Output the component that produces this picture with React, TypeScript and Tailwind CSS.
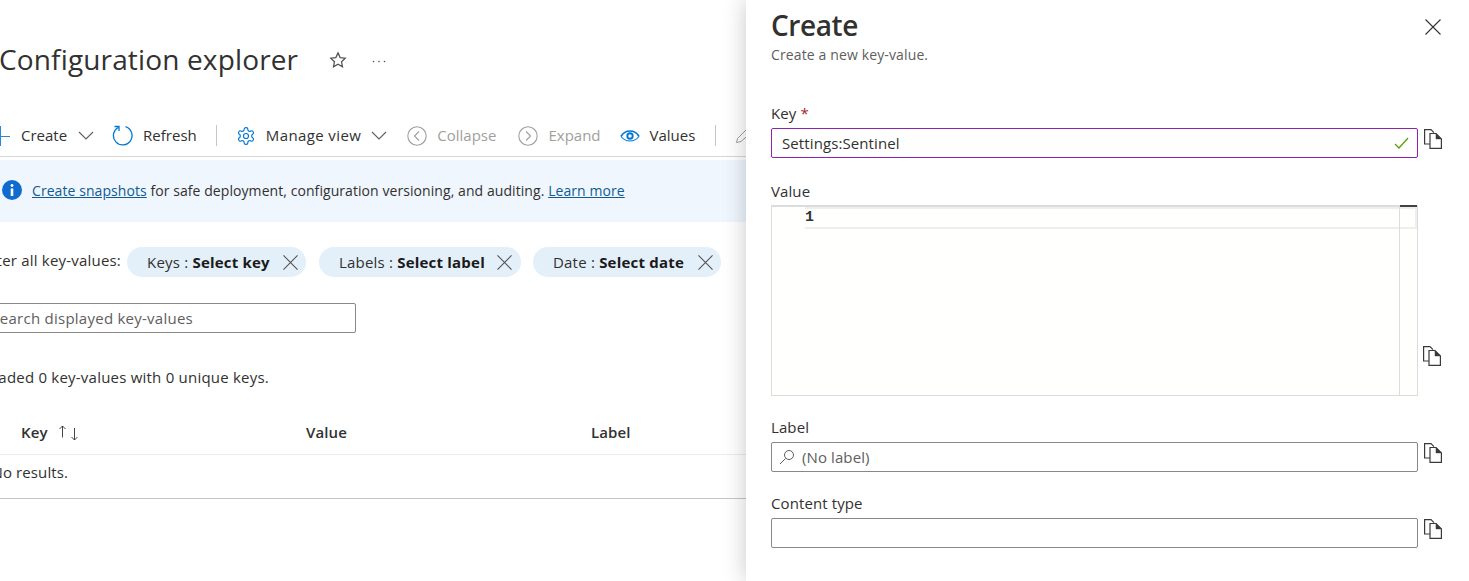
function CloseIcon({ size = 15, color = '#505050' }: { size?: number; color?: string }) {
  return (
    <svg width={size} height={size} viewBox="0 0 16 16" fill="none" stroke={color} strokeWidth="1.1">
      <path d="M0.5 0.5 15.5 15.5M15.5 0.5 0.5 15.5" />
    </svg>
  )
}

function Chevron() {
  return (
    <svg width="16" height="9" viewBox="0 0 16 9" fill="none" stroke="#605e5c" strokeWidth="1.1">
      <path d="M1 1l7 7 7-7" />
    </svg>
  )
}

function CopyIcon() {
  return (
    <svg width="18" height="20" viewBox="0 0 18 20" fill="none" stroke="#3b3a39" strokeWidth="1.2">
      <path d="M6 15H.6V.6H7l3 3" />
      <path d="M6 4.500h6l5.400 5.400v9.500H6z" fill="white" />
      <path d="M12 4.500v5.400h5.400z" fill="#3b3a39" strokeWidth="0.5" />
    </svg>
  )
}

function RoundArrow({ right }: { right?: boolean }) {
  return (
    <svg width="20" height="20" viewBox="0 0 20 20" fill="none" stroke="#a19f9d" strokeWidth="1.1">
      <circle cx="10" cy="10" r="9.200" />
      <path d={right ? 'M8 5.500l4.500 4.500L8 14.500' : 'M12 5.500 7.500 10l4.500 4.500'} />
    </svg>
  )
}

function ToolItem({ label, icon, chevron, muted, className }: { label: string; icon: React.ReactNode; chevron?: boolean; muted?: boolean; className?: string }) {
  return (
    <div className={`flex items-center ${muted ? 'text-[#a19f9d]' : 'text-[#323130]'} ${className ?? ''}`}>
      {icon}
      <span className="ml-[10px] whitespace-nowrap">{label}</span>
      {chevron && (
        <span className="ml-[10px]">
          <Chevron />
        </span>
      )}
    </div>
  )
}

function Chip({ name, value, className }: { name: string; value: string; className: string }) {
  return (
    <div className={`flex h-[30px] items-center justify-between rounded-full bg-[#e3eff9] pl-[20px] text-[15px] tracking-[0.2px] ${className}`}>
      <span className="whitespace-nowrap text-[#323130]">
        {name} : <b className="font-bold text-[#1b1a19]">{value}</b>
      </span>
      <CloseIcon />
    </div>
  )
}

function FieldLabel({ children }: { children: React.ReactNode }) {
  return <div className="h-[20px] leading-[18px] text-[#323130]">{children}</div>
}

export default function App() {
  return (
    <div className="flex h-[581px] w-[1469px] overflow-hidden bg-white font-['Open_Sans',sans-serif] text-[15px] tracking-[0.1px]">
      {/* Blade behind the panel */}
      <div className="w-[746px] shrink-0 overflow-hidden">
        <div className="flex h-[115px] items-start pt-[38px]">
          <h1 className="-ml-[1px] text-[28px] leading-[42px] tracking-[0.15px] text-[#323130]">Configuration explorer</h1>
          <svg className="ml-[31px] mt-[13px]" width="18" height="18" viewBox="0 0 24 24" fill="none" stroke="#505050" strokeWidth="1.600">
            <path d="M12 2.500l2.900 6.300 6.800.8-5 4.700 1.300 6.800-6-3.400-6 3.400 1.300-6.800-5-4.700 6.800-.8z" />
          </svg>
          <svg className="ml-[25px] mt-[22px]" width="14" height="3" viewBox="0 0 14 3" fill="#505050">
            <circle cx="1.500" cy="1.500" r="0.800" />
            <circle cx="7" cy="1.500" r="0.800" />
            <circle cx="12.500" cy="1.500" r="0.800" />
          </svg>
        </div>

        <div className="flex h-[42px] w-[760px] items-center border-b border-[#d6d6d6] tracking-normal">
          <svg className="ml-[-10px]" width="20" height="20" viewBox="0 0 20 20" stroke="#2b88d8" strokeWidth="1">
            <path d="M0 10.500h20M10.500 0v20" />
          </svg>
          <span className="ml-[11px] text-[#323130]">Create</span>
          <span className="ml-[11px]">
            <Chevron />
          </span>
          <div className="ml-[18px]">
            <ToolItem
              label="Refresh"
              icon={
                <svg width="21" height="21" viewBox="0 0 21 21" fill="none" stroke="#0078d4" strokeWidth="1.300">
                  <path d="M6.500 2.300A9.300 9.300 0 1 0 13.500 1.700" />
                  <path d="M2.500 1.500h4.500V6" strokeLinejoin="miter" />
                </svg>
              }
            />
          </div>
          <div className="ml-[19px] h-[21px] w-px bg-[#c8c6c4]" />
          <div className="ml-[19px]">
            <ToolItem
              label="Manage view"
              chevron
              className="tracking-[0.4px]"
              icon={
                <svg width="20" height="20" viewBox="0 0 24 24" fill="none" stroke="#0078d4" strokeWidth="1.400">
                  <path d="M12.220 2h-.44a2 2 0 0 0-2 2v.18a2 2 0 0 1-1 1.730l-.43.250a2 2 0 0 1-2 0l-.150-.080a2 2 0 0 0-2.730.730l-.220.380a2 2 0 0 0 .730 2.730l.150.100a2 2 0 0 1 1 1.720v.510a2 2 0 0 1-1 1.740l-.150.090a2 2 0 0 0-.730 2.730l.220.380a2 2 0 0 0 2.730.730l.150-.080a2 2 0 0 1 2 0l.430.250a2 2 0 0 1 1 1.730V20a2 2 0 0 0 2 2h.440a2 2 0 0 0 2-2v-.180a2 2 0 0 1 1-1.730l.430-.250a2 2 0 0 1 2 0l.150.080a2 2 0 0 0 2.730-.730l.220-.390a2 2 0 0 0-.730-2.730l-.150-.080a2 2 0 0 1-1-1.740v-.500a2 2 0 0 1 1-1.740l.150-.090a2 2 0 0 0 .730-2.730l-.220-.380a2 2 0 0 0-2.730-.730l-.150.080a2 2 0 0 1-2 0l-.430-.250a2 2 0 0 1-1-1.730V4a2 2 0 0 0-2-2z" />
                  <circle cx="12" cy="12" r="3" />
                </svg>
              }
            />
          </div>
          <div className="ml-[20px]">
            <ToolItem label="Collapse" muted icon={<RoundArrow />} />
          </div>
          <div className="ml-[22px]">
            <ToolItem label="Expand" muted icon={<RoundArrow right />} />
          </div>
          <div className="ml-[19px]">
            <ToolItem
              label="Values"
              icon={
                <svg width="20" height="12" viewBox="0 0 20 12" fill="none" stroke="#0078d4" strokeWidth="1.700">
                  <path d="M1 6.500C3 3 6 1 10 1s7 2 9 5.500" />
                  <path d="M1 6.500C3.500 9.500 6 11 10 11s6.500-1.500 9-4.500" strokeWidth="1.100" />
                  <circle cx="10" cy="6" r="2.700" strokeWidth="1.900" />
                </svg>
              }
            />
          </div>
          <div className="ml-[20px] h-[21px] w-px bg-[#c8c6c4]" />
          <svg className="ml-[20px]" width="20" height="20" viewBox="0 0 20 20" fill="none" stroke="#a19f9d" strokeWidth="1">
            <path d="M.5 16.500l1-4L13 1l4 4L5 15.500z" />
          </svg>
        </div>

        <div className="mt-[3px] flex h-[62px] items-center bg-[#eff6fe] pb-[2px] pl-[2px] text-[14px] tracking-[0.07px] text-[#323130]">
          <svg width="20" height="20" viewBox="0 0 20 20">
            <circle cx="10" cy="10" r="10" fill="#0f6cce" />
            <circle cx="10" cy="5.500" r="1.400" fill="white" />
            <rect x="8.700" y="8.500" width="2.600" height="7.500" fill="white" />
          </svg>
          <span className="ml-[10px] whitespace-nowrap">
            <span className="text-[#0f5b94] underline">Create snapshots</span> for safe deployment, configuration versioning, and auditing.{' '}
            <span className="text-[#0f5b94] underline">Learn more</span>
          </span>
        </div>

        <div className="mt-[25px] flex items-center">
          <div className="flex w-[121px] shrink-0 justify-end overflow-hidden whitespace-nowrap pb-[4px] tracking-[0.2px] text-[#323130]">
            Filter all key-values:
          </div>
          <Chip name="Keys" value="Select key" className="ml-[6px] w-[179px] pr-[8px]" />
          <Chip name="Labels" value="Select label" className="ml-[13px] w-[202px] pr-[9px]" />
          <Chip name="Date" value="Select date" className="ml-[12px] w-[188px] pr-[8px]" />
        </div>

        <div className="-ml-[10px] mt-[26px] flex h-[30px] w-[366px] items-center justify-end rounded-[2px] border border-[#8a8886] pr-[162px] tracking-[0.25px] whitespace-nowrap text-[#605e5c]">
          Search displayed key-values
        </div>

        <div className="mt-[35px] flex h-[20px] w-[269px] justify-end overflow-hidden whitespace-nowrap leading-[18px] tracking-[0.22px] text-[#323130]">
          Loaded 0 key-values with 0 unique keys.
        </div>

        <div className="mt-[25px] flex h-[42px] items-center border-b border-[#edebe9] pb-[2px] font-semibold text-[#323130]">
          <span className="ml-[21px] w-[37px]">Key</span>
          <svg width="22" height="16" viewBox="0 0 22 16" fill="none" stroke="#323130" strokeWidth="0.900">
            <path d="M4.500 12.500V1M1.500 4l3-3 3 3M16.500 3v12M13.500 12l3 3 3-3" />
          </svg>
          <span className="ml-[226px] w-[285px]">Value</span>
          <span>Label</span>
        </div>
        <div className="flex h-[44px] items-center border-b border-[#c8c6c4] pb-[8px] text-[#323130]">
          <div className="flex w-[68px] justify-end overflow-hidden whitespace-nowrap">No results.</div>
        </div>
      </div>

      {/* Create panel */}
      <div className="relative z-10 flex-1 bg-white pl-[25px] pr-[52px] pt-[4px] shadow-[0_0_22px_rgba(0,0,0,0.22)]">
        <h2 className="h-[38px] text-[28px] font-semibold leading-[42px] tracking-[-0.4px] text-[#323130]">Create</h2>
        <p className="mt-[3px] h-[20px] text-[14px] leading-[20px] tracking-[0.13px] text-[#605e5c]">Create a new key-value.</p>
        <button className="absolute right-[29px] top-[19px]">
          <CloseIcon size={16} color="#323130" />
        </button>

        <div className="mt-[39px]">
          <FieldLabel>
            Key <span className="text-[#a4262c]">*</span>
          </FieldLabel>
          <div className="relative mt-[4px] flex h-[30px] items-center rounded-[2px] border border-[#8e24aa] px-[10px] text-[#323130]">
            Settings:Sentinel
            <svg className="absolute right-[8px] top-[8px]" width="15" height="13" viewBox="0 0 15 13" fill="none" stroke="#57a300" strokeWidth="1.300">
              <path d="M1 7l4 4 9-10" />
            </svg>
            <span className="absolute right-[-25px] top-[0px]">
              <CopyIcon />
            </span>
          </div>
        </div>

        <div className="mt-[24px]">
          <FieldLabel>Value</FieldLabel>
          <div className="relative mt-[3px] flex h-[191px] w-[647px] border border-[#dcdcdc] border-t-[2px] bg-[#fffffe]">
            <div className="w-[33px] pl-[33px] font-['Liberation_Mono',monospace] text-[15px] font-bold leading-[22px] tracking-normal text-[#333]">1</div>
            <div className="absolute left-[33px] right-0 top-0 h-[22px] border-y-2 border-r-2 border-[#eeeeee]" />
            <div className="relative ml-auto w-[18px] border-l border-[#dcdcdc]">
              <div className="-mt-[2px] h-[2px] bg-[#424242]" />
            </div>
            <span className="absolute right-[-24px] top-[139px]">
              <CopyIcon />
            </span>
          </div>
        </div>

        <div className="mt-[22px]">
          <FieldLabel>Label</FieldLabel>
          <div className="relative mt-[4px] flex h-[30px] items-center rounded-[2px] border border-[#8a8886] pl-[7px] text-[#605e5c]">
            <svg width="16" height="16" viewBox="0 0 16 16" fill="none" stroke="#605e5c" strokeWidth="1">
              <circle cx="10" cy="6" r="4.500" />
              <path d="M6.500 9.500 1 15" />
            </svg>
            <span className="ml-[7px]">(No label)</span>
            <span className="absolute right-[-25px] top-[0px]">
              <CopyIcon />
            </span>
          </div>
        </div>

        <div className="mt-[22px]">
          <FieldLabel>Content type</FieldLabel>
          <div className="relative mt-[4px] h-[30px] rounded-[2px] border border-[#8a8886]">
            <span className="absolute right-[-25px] top-[0px]">
              <CopyIcon />
            </span>
          </div>
        </div>
      </div>
    </div>
  )
}
